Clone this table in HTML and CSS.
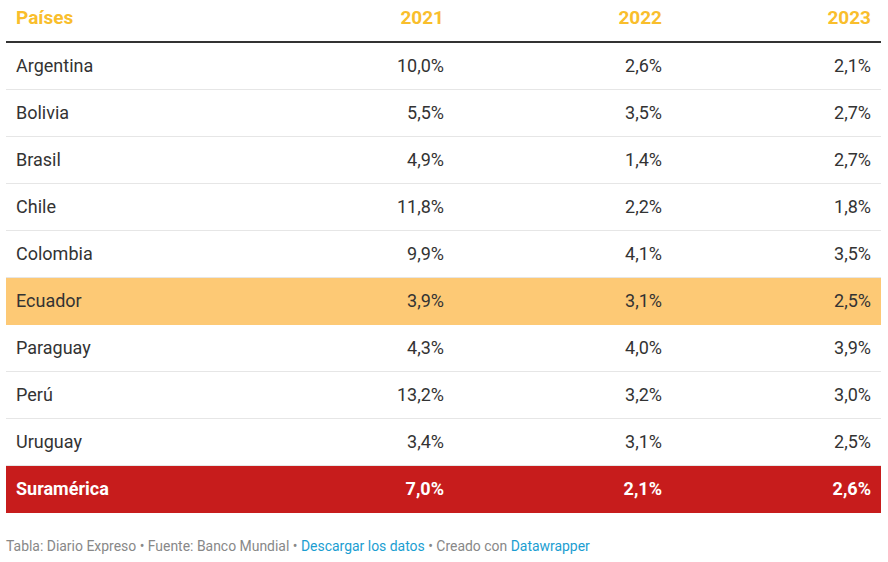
FILE: index.html
```html
<!DOCTYPE html>
<html lang="es">
<head>
<meta charset="utf-8">
<link rel="stylesheet" href="styles.css">
</head>
<body>
<div class="wrap">
<table class="tbl">
<colgroup><col class="c1"><col class="c2"><col class="c3"><col class="c4"></colgroup>
<thead>
<tr><th class="l">Países</th><th>2021</th><th>2022</th><th>2023</th></tr>
</thead>
<tbody>
<tr><td class="l">Argentina</td><td>10,0%</td><td>2,6%</td><td>2,1%</td></tr>
<tr><td class="l">Bolivia</td><td>5,5%</td><td>3,5%</td><td>2,7%</td></tr>
<tr><td class="l">Brasil</td><td>4,9%</td><td>1,4%</td><td>2,7%</td></tr>
<tr><td class="l">Chile</td><td>11,8%</td><td>2,2%</td><td>1,8%</td></tr>
<tr><td class="l">Colombia</td><td>9,9%</td><td>4,1%</td><td>3,5%</td></tr>
<tr class="hl"><td class="l">Ecuador</td><td>3,9%</td><td>3,1%</td><td>2,5%</td></tr>
<tr><td class="l">Paraguay</td><td>4,3%</td><td>4,0%</td><td>3,9%</td></tr>
<tr><td class="l">Perú</td><td>13,2%</td><td>3,2%</td><td>3,0%</td></tr>
<tr><td class="l">Uruguay</td><td>3,4%</td><td>3,1%</td><td>2,5%</td></tr>
<tr class="total"><td class="l">Suramérica</td><td>7,0%</td><td>2,1%</td><td>2,6%</td></tr>
</tbody>
</table>
<p class="foot">Tabla: Diario Expreso • Fuente: Banco Mundial • <a href="#">Descargar los datos</a> • Creado con <a href="#">Datawrapper</a></p>
</div>
</body>
</html>
```
FILE: styles.css
```css
html, body { margin: 0; padding: 0; background: #fff; }
body { font-family: Roboto, "Liberation Sans", sans-serif; color: #333; }
.wrap { padding: 0 7px 0 6px; }
.tbl { width: 875px; border-collapse: collapse; table-layout: fixed; font-size: 18px; }
.c1 { width: 230px; }
.c2 { width: 218px; }
.c3 { width: 218px; }
.c4 { width: 209px; }
th, td { text-align: right; padding: 0 10px; white-space: nowrap; }
.l { text-align: left; }
th { color: #f9be2c; font-size: 19px; font-weight: 700; height: 42px; padding-top: 8px; padding-bottom: 12px; vertical-align: top; line-height: 20px; border-bottom: 2px solid #333; box-sizing: border-box; }
td { height: 47px; border-bottom: 1px solid #e6e6e6; line-height: 20px; box-sizing: border-box; color: #333; }
tr.hl td { background: #fdc975; border-bottom-color: #fdc975; }
tr.total td { background: #c71c1c; color: #fff; font-weight: 700; border-bottom: none; height: 48px; }
.foot { margin: 25px 0 0; font-size: 13.95px; line-height: 16px; color: #888; }
.foot a { color: #1b9ed1; text-decoration: none; }
```
